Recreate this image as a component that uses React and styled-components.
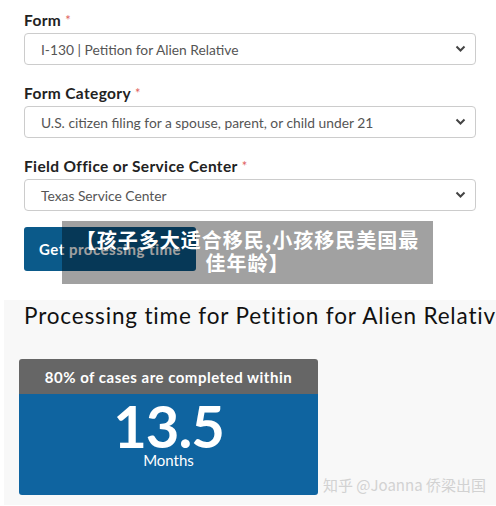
import React from 'react';
import styled, { createGlobalStyle } from 'styled-components';

const Global = createGlobalStyle`
  body {
    margin: 0;
    background: #fff;
    font-family: Lato, "Noto Sans", "Liberation Sans", sans-serif;
  }
`;

const Page = styled.div`
  position: relative;
  width: 496px;
  height: 506px;
  overflow: hidden;
`;

const FormArea = styled.div`
  padding: 11px 20px 0 24px;
  display: flex;
  flex-direction: column;
  gap: 19px;
`;

const Field = styled.div`
  display: flex;
  flex-direction: column;
  gap: 4px;
`;

const Label = styled.div`
  font-size: 15.5px;
  line-height: 18px;
  font-weight: 700;
  letter-spacing: 0.35px;
  color: #222;
`;

const Req = styled.span`
  color: #e0625e;
  font-weight: 400;
  font-size: 13px;
  margin-left: 4px;
  vertical-align: top;
`;

const Select = styled.div`
  height: 32px;
  box-sizing: border-box;
  border: 1px solid #ccc;
  border-radius: 4px;
  display: flex;
  align-items: center;
  justify-content: space-between;
  padding: 0 9px 0 16px;
  font-size: 13.8px;
  color: #555;
`;

const Button = styled.button`
  margin-top: -3px;
  width: 172px;
  height: 44px;
  border: 0;
  border-radius: 3px;
  background: #0b5a8a;
  color: #fff;
  font-family: inherit;
  font-size: 15px;
  font-weight: 700;
  letter-spacing: 0.5px;
  cursor: pointer;
`;

const Results = styled.div`
  margin: 29px 0 0 4px;
  height: 205px;
  background: #f8f8f8;
  padding: 2px 0 0 15px;
  box-sizing: border-box;
`;

const Heading = styled.h2`
  margin: 0 0 0 5px;
  font-size: 22.5px;
  line-height: 28px;
  font-weight: 400;
  letter-spacing: 0.85px;
  color: #111;
  white-space: nowrap;
`;

const Card = styled.div`
  margin-top: 29px;
  width: 299px;
  border-radius: 3px;
  overflow: hidden;
`;

const CardHead = styled.div`
  height: 35px;
  background: #666;
  color: #fff;
  font-size: 15px;
  font-weight: 700;
  letter-spacing: 0.5px;
  display: flex;
  align-items: center;
  justify-content: center;
`;

const CardBody = styled.div`
  height: 101px;
  background: #0f64a0;
  color: #fff;
  display: flex;
  flex-direction: column;
  align-items: center;
  padding-top: 2px;
  box-sizing: border-box;
`;

const Big = styled.div`
  font-size: 58px;
  line-height: 60px;
  font-weight: 700;
  letter-spacing: -1px;
`;

const Unit = styled.div`
  font-size: 15px;
  line-height: 16px;
  margin-top: -4px;
`;

const Banner = styled.div`
  position: absolute;
  left: 62px;
  top: 221px;
  width: 371px;
  height: 63px;
  background: rgba(0, 0, 0, 0.37);
  color: #fff;
  font-family: "Noto Sans CJK SC", sans-serif;
  font-weight: 700;
  font-size: 20px;
  line-height: 23px;
  letter-spacing: 1px;
  text-align: center;
  padding: 7px 12px 0;
  box-sizing: border-box;
`;

const Watermark = styled.div`
  position: absolute;
  left: 323px;
  top: 475px;
  color: #d2d2d2;
  font-family: "Noto Sans CJK SC", sans-serif;
  font-size: 15px;
  line-height: 20px;
  white-space: nowrap;
`;

const Chevron = () => (
  <svg width="11" height="8" viewBox="0 0 11 8">
    <path d="M1.5 1.5 L5.5 5.5 L9.5 1.5" fill="none" stroke="#444" strokeWidth="2" />
  </svg>
);

const fields = [
  { label: 'Form', value: 'I-130 | Petition for Alien Relative' },
  { label: 'Form Category', value: 'U.S. citizen filing for a spouse, parent, or child under 21' },
  { label: 'Field Office or Service Center', value: 'Texas Service Center' },
];

export default function App() {
  return (
    <Page>
      <Global />
      <FormArea>
        {fields.map((f) => (
          <Field key={f.label}>
            <Label>
              {f.label}
              <Req>*</Req>
            </Label>
            <Select>
              <span>{f.value}</span>
              <Chevron />
            </Select>
          </Field>
        ))}
        <Button>Get processing time</Button>
      </FormArea>
      <Results>
        <Heading>Processing time for Petition for Alien Relative</Heading>
        <Card>
          <CardHead>80% of cases are completed within</CardHead>
          <CardBody>
            <Big>13.5</Big>
            <Unit>Months</Unit>
          </CardBody>
        </Card>
      </Results>
      <Banner>【孩子多大适合移民,小孩移民美国最佳年龄】</Banner>
      <Watermark>知乎 @Joanna 侨梁出国</Watermark>
    </Page>
  );
}
